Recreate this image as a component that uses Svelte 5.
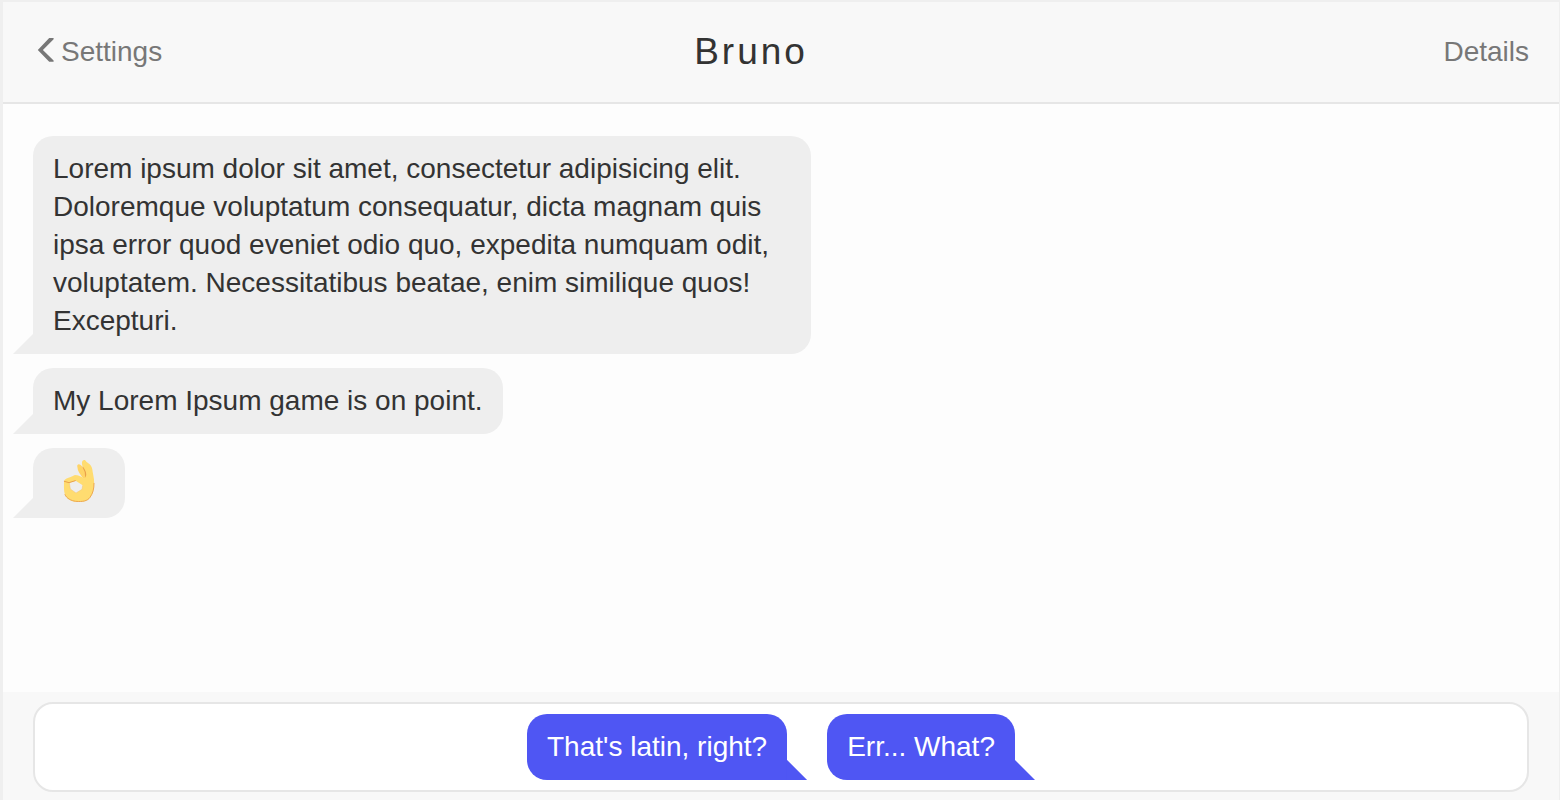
<script>
  const contact = 'Bruno';
  const messages = [
    { text: 'Lorem ipsum dolor sit amet, consectetur adipisicing elit. Doloremque voluptatum consequatur, dicta magnam quis ipsa error quod eveniet odio quo, expedita numquam odit, voluptatem. Necessitatibus beatae, enim similique quos! Excepturi.' },
    { text: 'My Lorem Ipsum game is on point.' },
    { emoji: true }
  ];
  const replies = ["That's latin, right?", 'Err... What?'];
</script>

<main class="chat">
  <header>
    <a class="back" href="#settings">
      <svg viewBox="0 0 18 26" width="18" height="26" aria-hidden="true">
        <path d="M16.6 1 H12.2 L0.8 12.9 L12.2 24.7 H16.6 V23.6 L5.9 12.9 L16.6 2.2 Z" fill="currentColor" />
      </svg>
      <span>Settings</span>
    </a>
    <h1>{contact}</h1>
    <a class="details" href="#details">Details</a>
  </header>

  <section class="messages">
    {#each messages as message}
      <div class="bubble received">
        {#if message.emoji}
          <svg class="emoji" viewBox="9 36 156 126" width="52" height="42" role="img" aria-label="OK hand">
            <path d="M82 50 C80 43 87 40 92 45 C101 53 109 68 112 84 L100 86 C90 72 83 64 82 50 Z" fill="#ffd466" />
            <path d="M100 51 C106 60 109 69 108 81" fill="none" stroke="#e9a14a" stroke-width="5" stroke-linecap="round" />
            <path fill-rule="evenodd" d="M96 38 C96 28 106 27 109 35 L119 43 C125 48 127 56 128 65 L132 88 C133 112 131 128 121 142 C113 154 100 156 77 155 C62 153 50 145 45 134 C41 124 42 108 42 93 C45 86 53 84 62 81 L75 75 C84 75 94 80 101 85 C106 84 108 80 109 74 C109 65 105 59 101 53 C97 47 95 44 96 38 Z M58 98 L77 92 L98 106 L96 118 L78 129 L61 117 Z" fill="#ffdc70" />
            <path fill="none" stroke="#e9a14a" stroke-width="3" stroke-linecap="round" d="M43 94 L57 98 L76 92" />
            <path d="M45 134 C50 146 64 152 77 154 C99 156 112 153 120 142 C129 130 132 116 132 100" fill="none" stroke="#eda851" stroke-width="3" stroke-linecap="round" />
            <path d="M58 98 L61 117 L78 129 L96 118 L98 106" fill="none" stroke="#f3c477" stroke-width="1.5" />
          </svg>
        {:else}
          {message.text}
        {/if}
      </div>
    {/each}
  </section>

  <footer>
    <div class="replies">
      {#each replies as reply}
        <button type="button" class="bubble sent">{reply}</button>
      {/each}
    </div>
  </footer>
</main>

<style>
  :global(body) {
    margin: 0;
    background: #fdfdfd;
  }

  .chat {
    box-sizing: border-box;
    min-height: 100vh;
    display: flex;
    flex-direction: column;
    border: solid #efefef;
    border-width: 2px 1px 0 3px;
    background: #fdfdfd;
    color: #333;
    font-family: "Liberation Sans", Arial, sans-serif;
    font-size: 28px;
    line-height: 38px;
  }

  header {
    display: grid;
    grid-template-columns: 1fr auto 1fr;
    align-items: center;
    min-height: 100px;
    padding: 0 30px;
    border-bottom: 2px solid #e6e6e6;
    background: #f8f8f8;
  }

  header a {
    color: #777;
    text-decoration: none;
  }

  .back {
    display: flex;
    align-items: center;
    gap: 6px;
    padding-left: 4px;
  }

  .back svg {
    margin-bottom: 4px;
  }

  .details {
    justify-self: end;
  }

  h1 {
    margin: 0;
    padding-right: 60px;
    font-size: 37px;
    font-weight: 400;
    letter-spacing: 3px;
  }

  .messages {
    flex: 1;
    display: flex;
    flex-direction: column;
    align-items: flex-start;
    gap: 14px;
    padding: 32px 30px;
  }

  .bubble {
    position: relative;
    box-sizing: border-box;
    padding: 14px 20px;
    border: 0;
    border-radius: 20px;
    font: inherit;
  }

  .bubble::after {
    content: "";
    position: absolute;
    bottom: 0;
    width: 21px;
    height: 20px;
    background: inherit;
  }

  .received {
    max-width: calc(50% + 30px);
    background: #eee;
    border-bottom-left-radius: 0;
  }

  .received::after {
    right: calc(100% - 1px);
    clip-path: polygon(20px 0, 100% 0, 100% 100%, 0 100%);
  }

  .emoji {
    display: block;
    overflow: visible;
  }

  footer {
    padding: 10px 30px 8px;
    background: #f8f8f8;
  }

  .replies {
    display: flex;
    flex-wrap: wrap;
    justify-content: center;
    gap: 20px;
    padding: 10px;
    border: 2px solid #e6e6e6;
    border-radius: 20px;
    background: #fff;
  }

  .sent {
    margin-right: 20px;
    background: #4f56f3;
    color: #fff;
    border-bottom-right-radius: 0;
    cursor: pointer;
  }

  .sent::after {
    left: calc(100% - 1px);
    clip-path: polygon(0 0, 1px 0, 100% 100%, 0 100%);
  }
</style>
